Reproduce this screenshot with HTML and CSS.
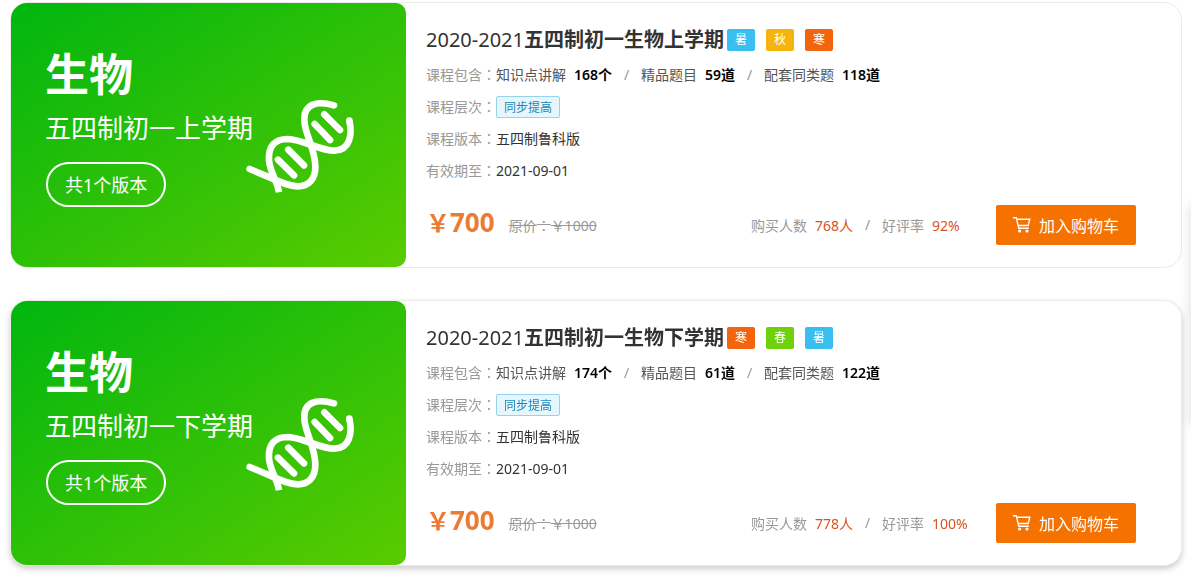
FILE: index.html
```html
<!DOCTYPE html>
<html lang="zh-CN">
<head>
  <meta charset="UTF-8">
  <meta name="viewport" content="width=device-width, initial-scale=1.0">
  <title>生物</title>
  <link rel="stylesheet" href="styles.css">
</head>
<body>
  <svg class="symbols" width="0" height="0">
    <symbol id="dna" viewBox="0 0 390 330">
      <g fill="none" stroke="currentColor" stroke-width="20">
        <path stroke-linecap="round" d="M297 46C245 31 205 42 208 92C210 135 240 175 241 228C242 268 220 289 188 289C155 288 130 272 44 237"/>
        <path d="M132 307C126 270 106 250 102 212C99 168 120 147 158 147C205 149 255 182 298 182C344 181 353 135 343 92"/>
        <path stroke-linecap="round" d="M343 93v-1M239 102l46 48M268 73l47 47M129 209l48 47M160 179l47 47"/>
      </g>
    </symbol>
    <symbol id="cart" viewBox="0 0 18 18">
      <path fill="none" stroke="currentColor" stroke-width="1.4" d="M0 1.7h3.2l2.6 10.6h10M3.6 3.2h13.2l-1.6 6.3H5.2"/>
      <circle cx="6.6" cy="15" r="1.6" fill="currentColor"/>
      <circle cx="14" cy="15" r="1.6" fill="currentColor"/>
    </symbol>
  </svg>

  <main class="course-list">
    <article class="course">
      <div class="cover">
        <h3>生物</h3>
        <p class="term">五四制初一上学期</p>
        <span class="versions">共1个版本</span>
        <svg class="dna"><use href="#dna"/></svg>
      </div>
      <div class="info">
        <div class="title">
          <h2><span class="year">2020-2021</span>五四制初一生物上学期</h2>
          <div class="seasons">
            <span class="season summer">暑</span>
            <span class="season autumn">秋</span>
            <span class="season winter">寒</span>
          </div>
        </div>
        <div class="row">
          <span class="label">课程包含<i lang="zh-TW">：</i></span>
          <span class="item">知识点讲解<b>168个</b></span><span class="slash">/</span>
          <span class="item">精品题目<b>59道</b></span><span class="slash">/</span>
          <span class="item">配套同类题<b>118道</b></span>
        </div>
        <div class="row"><span class="label">课程层次<i lang="zh-TW">：</i></span><span class="tag">同步提高</span></div>
        <div class="row"><span class="label">课程版本<i lang="zh-TW">：</i></span><span>五四制鲁科版</span></div>
        <div class="row"><span class="label">有效期至<i lang="zh-TW">：</i></span><span>2021-09-01</span></div>
        <div class="buy">
          <span class="price"><small>￥</small>700</span>
          <del>原价<i lang="zh-TW">：</i>￥1000</del>
          <div class="stats">
            <span>购买人数<em>768人</em></span><span class="slash">/</span>
            <span>好评率<em>92%</em></span>
          </div>
          <button type="button" class="cart-button"><svg><use href="#cart"/></svg>加入购物车</button>
        </div>
      </div>
    </article>

    <article class="course active">
      <div class="cover">
        <h3>生物</h3>
        <p class="term">五四制初一下学期</p>
        <span class="versions">共1个版本</span>
        <svg class="dna"><use href="#dna"/></svg>
      </div>
      <div class="info">
        <div class="title">
          <h2><span class="year">2020-2021</span>五四制初一生物下学期</h2>
          <div class="seasons">
            <span class="season winter">寒</span>
            <span class="season spring">春</span>
            <span class="season summer">暑</span>
          </div>
        </div>
        <div class="row">
          <span class="label">课程包含<i lang="zh-TW">：</i></span>
          <span class="item">知识点讲解<b>174个</b></span><span class="slash">/</span>
          <span class="item">精品题目<b>61道</b></span><span class="slash">/</span>
          <span class="item">配套同类题<b>122道</b></span>
        </div>
        <div class="row"><span class="label">课程层次<i lang="zh-TW">：</i></span><span class="tag">同步提高</span></div>
        <div class="row"><span class="label">课程版本<i lang="zh-TW">：</i></span><span>五四制鲁科版</span></div>
        <div class="row"><span class="label">有效期至<i lang="zh-TW">：</i></span><span>2021-09-01</span></div>
        <div class="buy">
          <span class="price"><small>￥</small>700</span>
          <del>原价<i lang="zh-TW">：</i>￥1000</del>
          <div class="stats">
            <span>购买人数<em>778人</em></span><span class="slash">/</span>
            <span>好评率<em>100%</em></span>
          </div>
          <button type="button" class="cart-button"><svg><use href="#cart"/></svg>加入购物车</button>
        </div>
      </div>
    </article>
  </main>
  <aside class="side-bar"></aside>
</body>
</html>
```
FILE: styles.css
```css
* { margin: 0; padding: 0; box-sizing: border-box; }
body {
  font-family: "Noto Sans", "Noto Sans CJK SC", sans-serif;
  font-size: 14px;
  color: #333;
  background: #fff;
  overflow-x: hidden;
}
i, em { font-style: normal; }
/* centred colon */
i { font-family: "Noto Sans CJK TC", sans-serif; }
.symbols { position: absolute; }
.course-list {
  display: flex;
  flex-direction: column;
  gap: 32px;
  padding: 2px 9px 10px 10px;
}
.course {
  display: flex;
  border: 1px solid #ebebeb;
  border-radius: 18px;
  background: #fff;
}
.course.active {
  position: relative;
  z-index: 1;
  box-shadow: 0 3px 6px rgba(0, 0, 0, 0.2);
}

/* left cover */
.cover {
  position: relative;
  flex: none;
  width: 395px;
  padding: 43px 34px 0;
  border-radius: 16px 10px 10px 16px;
  background: linear-gradient(to bottom right, #00b60f, #5acb00);
  color: #fff;
}
.cover h3 {
  font-size: 44px;
  line-height: 56px;
}
.term {
  margin-top: 6px;
  font-size: 26px;
  line-height: 40px;
}
.versions {
  display: inline-block;
  margin: 14px 0 0 1px;
  padding: 2px 17px 0;
  border: 2px solid #fff;
  border-radius: 23px;
  font-size: 18px;
  line-height: 39px;
}
.dna {
  position: absolute;
  top: 87px;
  right: 41px;
  width: 130px;
  height: 110px;
}

/* right side */
.info {
  flex: 1;
  padding: 24px 45px 22px 20px;
}
.title {
  display: flex;
  align-items: center;
  height: 25px;
  margin-bottom: 6px;
}
.title h2 {
  font-size: 20px;
  line-height: 26px;
}
.year { font-weight: 400; }
.seasons {
  display: flex;
  gap: 11px;
  margin-left: 3px;
}
.season {
  width: 28px;
  border-radius: 2px;
  color: #fff;
  font-size: 12px;
  line-height: 22px;
  text-align: center;
}
.summer { background: #38bff0; }
.autumn { background: #f6b50c; }
.winter { background: #f3650c; }
.spring { background: #6fd10a; }
.row {
  display: flex;
  align-items: center;
  height: 32px;
}
.label, .slash, del, .stats { color: #999; }
.label { width: 70px; }
.item { color: #555; }
.item b {
  margin-left: 8px;
  color: #000;
  font-weight: 600;
}
.slash {
  width: 29px;
  text-align: center;
}
.tag {
  margin-top: 2px;
  padding: 1px 7px 0;
  border: 1px solid #96d3ea;
  border-radius: 2px;
  background: #e5f6fd;
  color: #1d87b8;
  font-size: 12px;
  line-height: 19px;
}
.buy {
  display: flex;
  align-items: center;
  margin-top: 19px;
}
.price {
  padding-bottom: 6px;
  color: #ec7a30;
  font-size: 26px;
  font-weight: bold;
  line-height: 32px;
}
.price small { font-size: 24px; }
del { margin-left: 14px; }
.stats {
  display: flex;
  width: 245px;
  margin-left: auto;
}
.stats em {
  margin-left: 8px;
  color: #d9531e;
}
.cart-button {
  display: flex;
  align-items: center;
  justify-content: center;
  gap: 8px;
  width: 140px;
  height: 40px;
  border: none;
  border-radius: 2px;
  background: #f57200;
  color: #fff;
  font-family: inherit;
  font-size: 16px;
  cursor: pointer;
}
.cart-button svg {
  width: 18px;
  height: 18px;
}

/* floating bar docked to the window edge */
.side-bar {
  position: fixed;
  top: 205px;
  left: 100%;
  width: 60px;
  height: 220px;
  box-shadow: 0 0 12px rgba(0, 0, 0, 0.14);
}
```
